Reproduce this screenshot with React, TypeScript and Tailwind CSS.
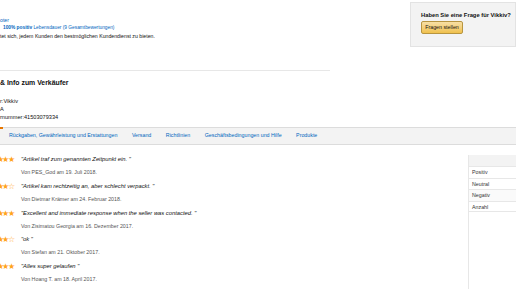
import React from "react";

interface Review {
  stars: number;
  quote: string;
  by: string;
}

const reviews: Review[] = [
  { stars: 5, quote: "Artikel traf zum genannten Zeitpunkt ein.", by: "Von PES_God am 19. Juli 2018." },
  { stars: 4, quote: "Artikel kam rechtzeitig an, aber schlecht verpackt.", by: "Von Dietmar Krämer am 24. Februar 2018." },
  { stars: 5, quote: "Excellent and immediate response when the seller was contacted.", by: "Von Zisimatou Georgia am 16. Dezember 2017." },
  { stars: 4, quote: "ok", by: "Von Stefan am 21. Oktober 2017." },
  { stars: 5, quote: "Alles super gelaufen", by: "Von Hoang T. am 18. April 2017." },
];

const tabs = [
  "Rückgaben, Gewährleistung und Erstattungen",
  "Versand",
  "Richtlinien",
  "Geschäftsbedingungen und Hilfe",
  "Produkte",
];

function Stars({ count }: { count: number }) {
  return (
    <div className="-ml-[15px] flex w-[36px] shrink-0 text-[7.6px] leading-[9px] text-[#ffa41c]">
      {[0, 1, 2, 3, 4].map((i) => (
        <span key={i} className="w-[5.8px] text-center">
          {i < count ? "★" : "☆"}
        </span>
      ))}
    </div>
  );
}

export default function App() {
  return (
    <div
      className="relative h-[290px] w-[516px] overflow-hidden bg-white text-[#111]"
      style={{ fontFamily: '"Liberation Sans", Arial, sans-serif' }}
    >
      {/* top */}
      <div className="flex h-[47px]">
        <div className="flex-1 pt-[16px] text-[5.2px] leading-[8px]">
          <div className="text-[#0066c0]">oter</div>
          <div className="pl-[3px] text-[4.8px] text-[#0066c0]">
            <span className="font-bold">100% positiv</span> Lebensdauer (9 Gesamtbewertungen)
          </div>
          <div>tet sich, jedem Kunden den bestmöglichen Kundendienst zu bieten.</div>
        </div>
        <div className="mt-[2px] w-[106px] border border-[#e3e3e3] bg-[#f3f3f3] pl-[10px] pt-[8px]">
          <div className="text-[5.8px] font-bold leading-[8px]">Haben Sie eine Frage für Vikkiv?</div>
          <button className="mt-[2px] block h-[13px] w-[42px] rounded-[2px] border border-[#b89540] bg-gradient-to-b from-[#f7dfa5] to-[#f0c14b] text-[5.3px] leading-[11px] text-[#111]">
            Fragen stellen
          </button>
        </div>
      </div>

      {/* divider */}
      <div className="mt-[23px] w-[330px] border-t border-[#e7e7e7]" />

      {/* seller info */}
      <div className="mt-[7px] text-[6.9px] font-bold leading-[10px]">&amp; Info zum Verkäufer</div>
      <div className="mt-[9px] text-[5.6px] leading-[8px]">
        <div>r:Vikkiv</div>
        <div>A</div>
        <div>rnummer:41503079334</div>
      </div>

      {/* tabs */}
      <div className="relative mt-[6px] flex h-[18px] items-center border-y border-[#dcdcdc] bg-[#f3f3f3] pl-[9px] text-[5.3px] text-[#0066c0]">
        <div className="absolute -top-px left-0 h-[2px] w-[3px] bg-[#e77600]" />
        {tabs.map((t) => (
          <span key={t} className="mr-[14.5px]">
            {t}
          </span>
        ))}
      </div>

      {/* reviews + table */}
      <div className="flex">
        <div className="flex-1 pt-[10px]">
          {reviews.map((r) => (
            <div key={r.by} className="flex h-[26.8px]">
              <Stars count={r.stars} />
              <div>
                <div className="text-[5.8px] italic leading-[9px] text-[#111]">
                  "{r.quote} "
                </div>
                <div className="mt-[4px] text-[5.3px] leading-[8px] text-[#555]">{r.by}</div>
              </div>
            </div>
          ))}
        </div>
        <div className="mt-[10px] w-[48px] border-l border-[#e7e7e7] text-[5.3px] text-[#333]">
          <div className="h-[11px] bg-[#f3f3f3]" />
          <div className="h-[11.5px] border-t border-[#e7e7e7] pl-[3px] leading-[11px]">Positiv</div>
          <div className="h-[11.5px] border-t border-[#e7e7e7] pl-[3px] leading-[11px]">Neutral</div>
          <div className="h-[11.5px] border-t border-[#e7e7e7] bg-[#fafafa] pl-[3px] leading-[11px]">Negativ</div>
          <div className="h-[11.5px] border-y border-[#e7e7e7] pl-[3px] leading-[11px]">Anzahl</div>
        </div>
      </div>
    </div>
  );
}
